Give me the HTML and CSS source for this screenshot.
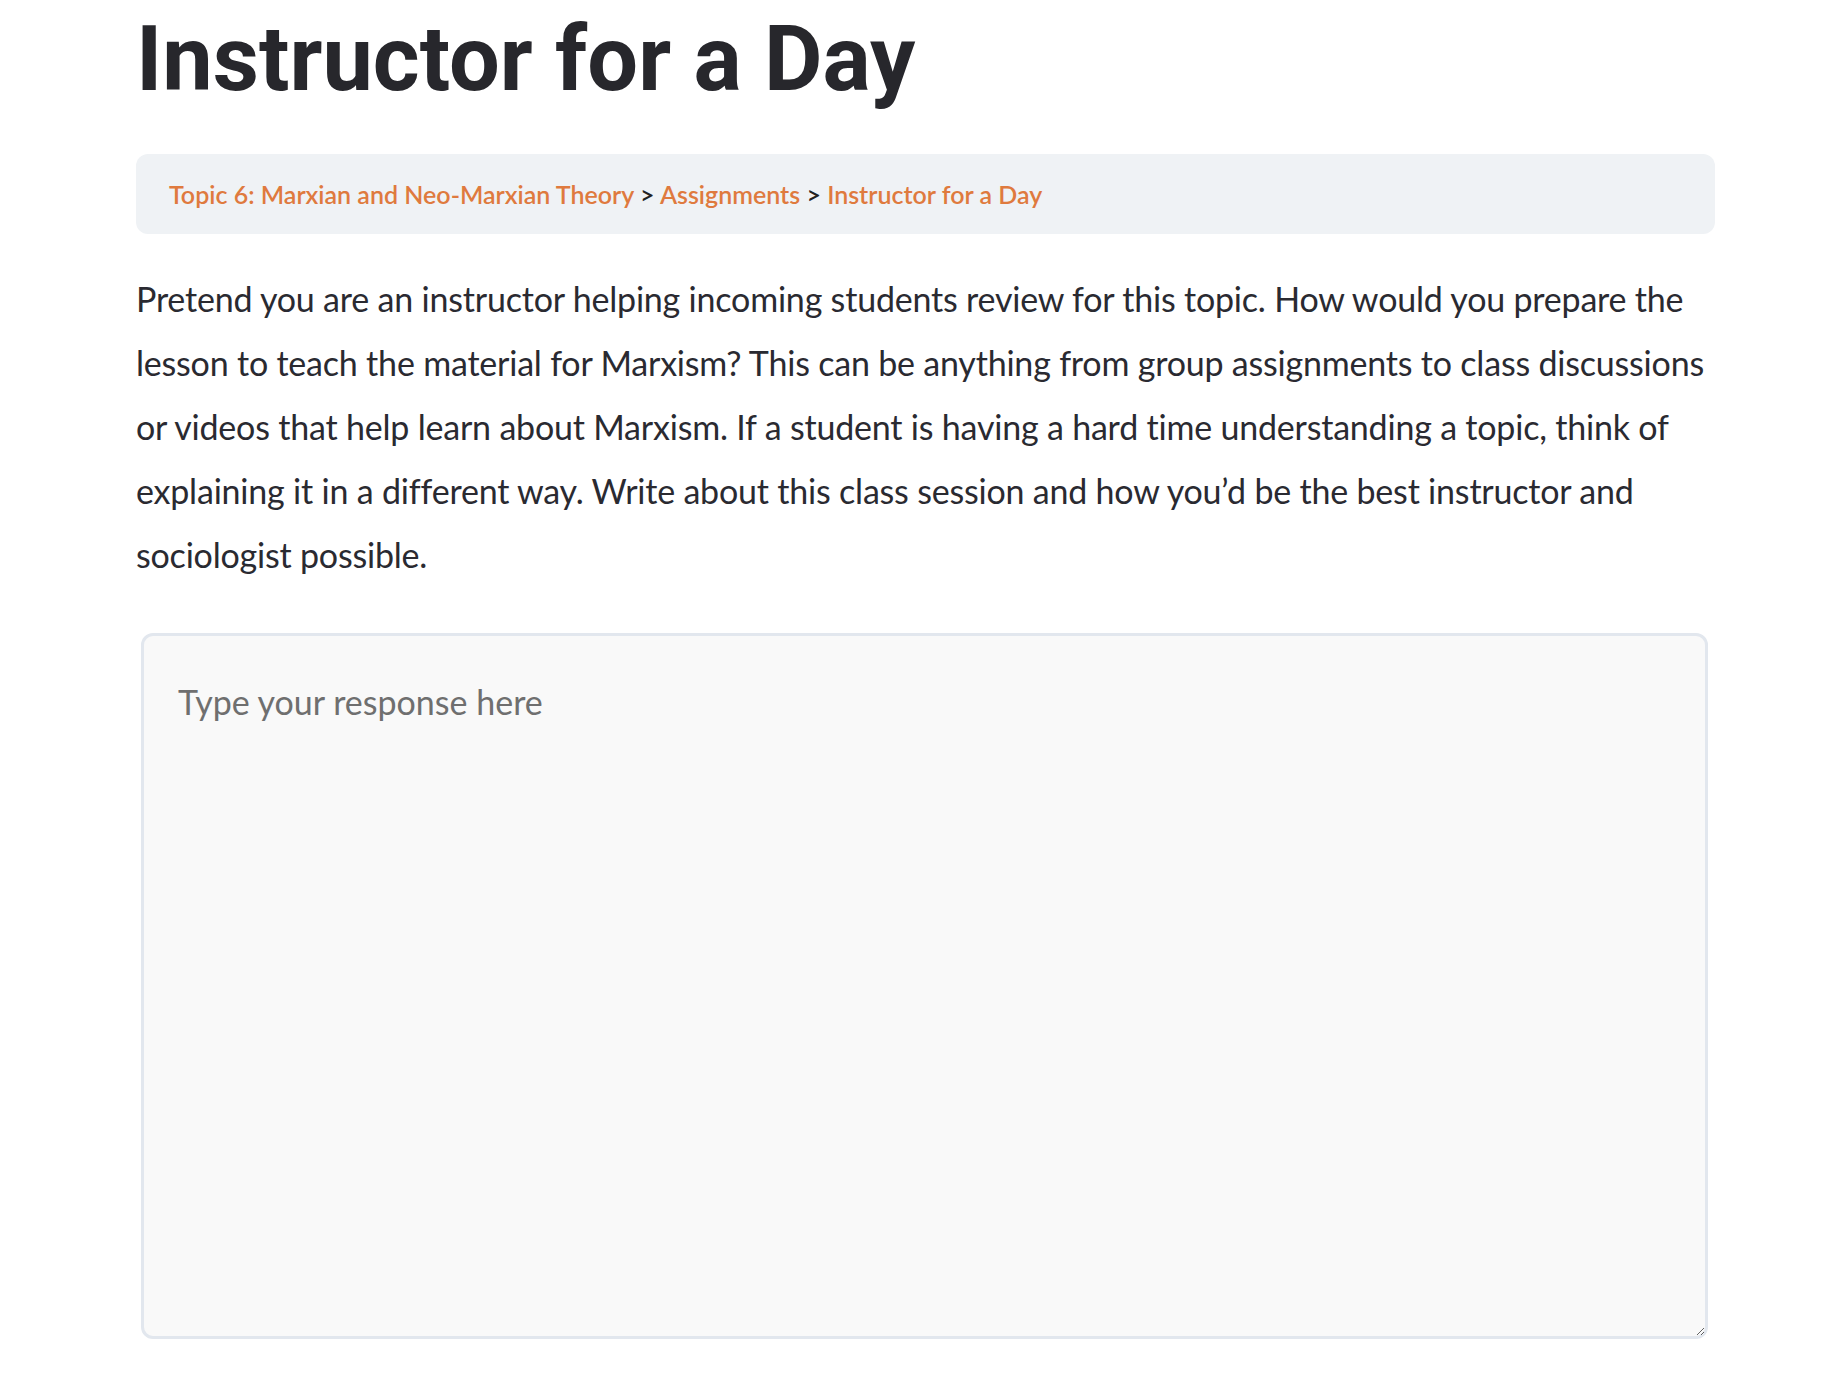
FILE: index.html
```html
<!DOCTYPE html>
<html lang="en">
<head>
  <meta charset="UTF-8" />
  <meta name="viewport" content="width=device-width, initial-scale=1.0"/>
  <title>Instructor for a Day</title>
  <link rel="stylesheet" href="styles.css">
</head>
<body>
  <div class="container">
    <h1 class="title">Instructor for a Day</h1>
    <nav class="breadcrumb">
      <a href="#">Topic 6: Marxian and Neo-Marxian Theory</a>
      <span class="sep">&gt;</span>
      <a href="#">Assignments</a>
      <span class="sep">&gt;</span>
      <a href="#">Instructor for a Day</a>
    </nav>
    <p class="prompt">Pretend you are an instructor helping incoming students review for this topic. How would you prepare the lesson to teach the material for Marxism? This can be anything from group assignments to class discussions or videos that help learn about Marxism. If a student is having a hard time understanding a topic, think of explaining it in a different way. Write about this class session and how you’d be the best instructor and sociologist possible.</p>
    <textarea class="response" placeholder="Type your response here"></textarea>
  </div>
</body>
</html>
```

FILE: styles.css
```css
* { box-sizing: border-box; }
body {
  margin: 0;
  background-color: #fff;
  font-family: Lato, "Liberation Sans", sans-serif;
  color: #2a2a31;
}
.container {
  width: 1579px;
  margin-left: 136px;
  padding-top: 6px;
}
.title {
  margin: 0;
  font-family: Roboto, "Liberation Sans", sans-serif;
  font-size: 90px;
  font-weight: 700;
  line-height: 1.2;
  color: #27272c;
}
.breadcrumb {
  margin-top: 40px;
  padding: 25px 33px;
  background-color: #eff2f5;
  border-radius: 12px;
  font-size: 25px;
  font-weight: 600;
  line-height: 30px;
}
.breadcrumb a {
  color: #df7a3e;
  text-decoration: none;
}
.breadcrumb .sep { color: #222; }
.prompt {
  margin: 33px 0 0;
  font-size: 34px;
  line-height: 64px;
  letter-spacing: -0.2px;
}
.response {
  display: block;
  width: 1567px;
  height: 706px;
  margin: 46px 0 0 5px;
  padding: 34px;
  border: 3px solid #e2e7ee;
  border-radius: 12px;
  background-color: #f9f9f9;
  font-family: Lato, "Liberation Sans", sans-serif;
  font-size: 34px;
  line-height: 64px;
  color: #2a2a31;
  outline: none;
}
.response::placeholder { color: #6f6f6f; }
```
